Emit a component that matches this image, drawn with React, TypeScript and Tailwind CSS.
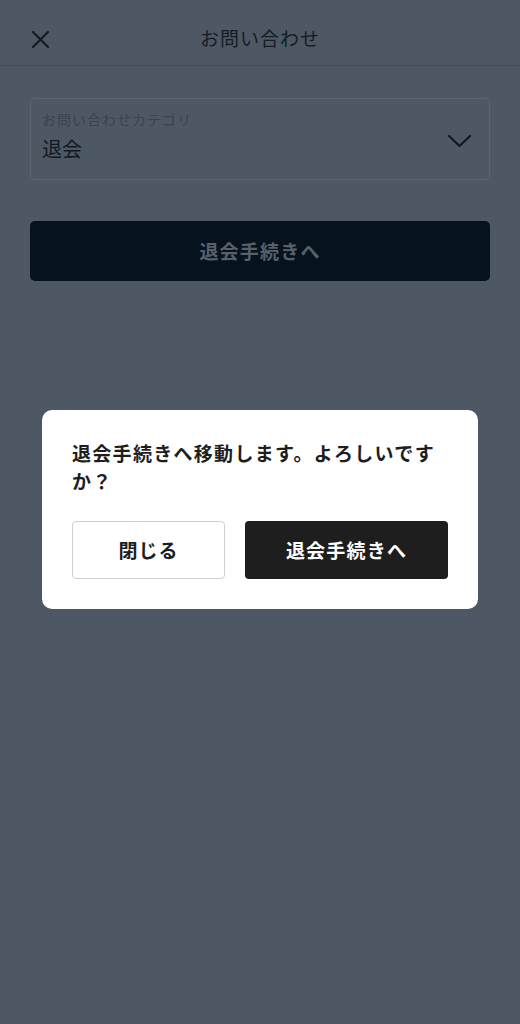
import React from "react";

const font = { fontFamily: '"Noto Sans CJK JP", "Noto Sans", sans-serif' };

export default function App() {
  return (
    <div className="relative w-[520px] h-[1024px] bg-[#4e5865] overflow-hidden" style={font}>
      {/* Header */}
      <div className="relative h-[66px] flex items-center justify-center border-b border-[#434c57]">
        <svg className="absolute left-[31px] top-[30px] w-[19px] h-[19px]" viewBox="0 0 19 19" fill="none">
          <path d="M2 2 L17 17 M17 2 L2 17" stroke="#131b24" strokeWidth="2.2" strokeLinecap="round" />
        </svg>
        <h1 className="text-[19px] text-[#141c25] tracking-[1px] mt-[10px] leading-none">お問い合わせ</h1>
      </div>

      <div className="px-[30px] pt-[32px]">
        {/* Select */}
        <div className="h-[82px] rounded-[5px] border border-[#5b6470] flex items-center pl-[11px] pr-[17px]">
          <div className="flex-1 flex flex-col mt-[-4px]">
            <span className="text-[14px] leading-[18px] text-[#3a434e] tracking-[1px] mt-[-3px]">お問い合わせカテゴリ</span>
            <span className="text-[20px] leading-[26px] mt-[8px] text-[#111820]">退会</span>
          </div>
          <svg className="w-[25px] h-[14px] mt-[4px]" viewBox="0 0 25 14" fill="none">
            <path d="M2 2 L12.5 12 L23 2" stroke="#111820" strokeWidth="2.2" strokeLinecap="round" strokeLinejoin="round" />
          </svg>
        </div>

        {/* Action button */}
        <div className="mt-[41px] h-[60px] rounded-[5px] bg-[#06131e] flex items-center justify-center">
          <span className="text-[19px] font-bold text-[#58616b] tracking-[1.2px]">退会手続きへ</span>
        </div>
      </div>

      {/* Dialog */}
      <div className="absolute left-[42px] top-[410px] w-[436px] h-[199px] bg-white rounded-[10px] px-[30px] pt-[29px]">
        <p className="text-[19px] font-bold leading-[28px] text-[#1e1e1e] tracking-[1.3px]">
          退会手続きへ移動します。よろしいですか？
        </p>
        <div className="mt-[26px] flex gap-[20px]">
          <button className="w-[153px] h-[58px] rounded-[4px] border border-[#cfcfcf] bg-white text-[19px] font-bold text-[#1e1e1e] tracking-[1px]">
            閉じる
          </button>
          <button className="w-[203px] h-[58px] rounded-[4px] bg-[#1e1e1e] text-[19px] font-bold text-white tracking-[1.2px]">
            退会手続きへ
          </button>
        </div>
      </div>
    </div>
  );
}
